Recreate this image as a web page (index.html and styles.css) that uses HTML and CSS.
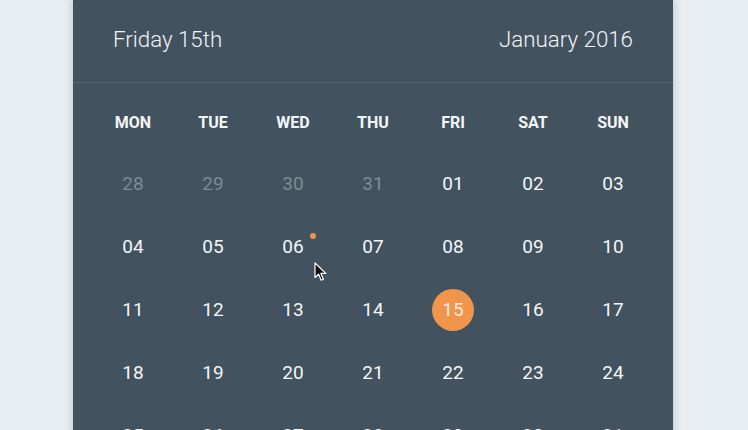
FILE: index.html
```html
<!DOCTYPE html>
<html>
<head>
<meta charset="utf-8">
<link rel="stylesheet" href="styles.css">
</head>
<body>
<div class="card">
  <div class="header">
    <span class="date">Friday 15th</span>
    <span class="month">January 2016</span>
  </div>
  <div class="body">
    <div class="weekdays">
      <div>MON</div><div>TUE</div><div>WED</div><div>THU</div><div>FRI</div><div>SAT</div><div>SUN</div>
    </div>
    <div class="days">
      <div class="day muted"><span>28</span></div>
      <div class="day muted"><span>29</span></div>
      <div class="day muted"><span>30</span></div>
      <div class="day muted"><span>31</span></div>
      <div class="day"><span>01</span></div>
      <div class="day"><span>02</span></div>
      <div class="day"><span>03</span></div>
      <div class="day"><span>04</span></div>
      <div class="day"><span>05</span></div>
      <div class="day event"><span>06</span><i class="dot"></i>
        <svg class="cursor" width="14" height="20" viewBox="0 0 14 20"><path d="M1 1 L1 15.5 L4.6 12.2 L7.2 18.2 L9.4 17.2 L6.9 11.4 L11.8 11.4 Z" fill="#111" stroke="#fff" stroke-width="1.2" stroke-linejoin="round"/></svg>
      </div>
      <div class="day"><span>07</span></div>
      <div class="day"><span>08</span></div>
      <div class="day"><span>09</span></div>
      <div class="day"><span>10</span></div>
      <div class="day"><span>11</span></div>
      <div class="day"><span>12</span></div>
      <div class="day"><span>13</span></div>
      <div class="day"><span>14</span></div>
      <div class="day selected"><span>15</span></div>
      <div class="day"><span>16</span></div>
      <div class="day"><span>17</span></div>
      <div class="day"><span>18</span></div>
      <div class="day"><span>19</span></div>
      <div class="day"><span>20</span></div>
      <div class="day"><span>21</span></div>
      <div class="day"><span>22</span></div>
      <div class="day"><span>23</span></div>
      <div class="day"><span>24</span></div>
      <div class="day"><span>25</span></div>
      <div class="day"><span>26</span></div>
      <div class="day"><span>27</span></div>
      <div class="day"><span>28</span></div>
      <div class="day"><span>29</span></div>
      <div class="day"><span>30</span></div>
      <div class="day"><span>31</span></div>
    </div>
  </div>
</div>
</body>
</html>
```
FILE: styles.css
```css
html, body {
  margin: 0;
  padding: 0;
  height: 100%;
  overflow: hidden;
}
body {
  background: #e6eef1;
  font-family: Roboto, "Liberation Sans", sans-serif;
}
.card {
  width: 600px;
  margin-left: 73px;
  background: #42525f;
  min-height: 500px;
  box-shadow: 0 0 8px rgba(40, 60, 75, 0.25);
  color: #f2f5f7;
}
.header {
  height: 82px;
  border-bottom: 1px solid #566670;
  display: flex;
  align-items: center;
  justify-content: space-between;
  padding: 0 40px;
  font-size: 22.3px;
  font-weight: 300;
  color: #f0f4f6;
}
.header span {
  position: relative;
  top: -2px;
}
.body {
  padding: 19px 20px 0;
}
.weekdays {
  display: grid;
  grid-template-columns: repeat(7, 80px);
  height: 40px;
  align-items: center;
  text-align: center;
  font-size: 16px;
  font-weight: 700;
  color: #f4f6f8;
  margin-bottom: 10px;
}
.days {
  display: grid;
  grid-template-columns: repeat(7, 80px);
  grid-auto-rows: 63px;
}
.day {
  display: flex;
  align-items: center;
  justify-content: center;
  font-size: 19px;
  position: relative;
  color: #f4f6f8;
}
.day span {
  width: 42px;
  height: 42px;
  border-radius: 50%;
  display: flex;
  align-items: center;
  justify-content: center;
}
.day.muted {
  color: #7d8b95;
}
.day.selected span {
  background: #f0954a;
  color: #fbeee2;
}
.dot {
  position: absolute;
  width: 6px;
  height: 6px;
  border-radius: 50%;
  background: #ef9350;
  left: 57px;
  top: 18px;
}
.cursor {
  position: absolute;
  left: 61px;
  top: 47px;
}
```
